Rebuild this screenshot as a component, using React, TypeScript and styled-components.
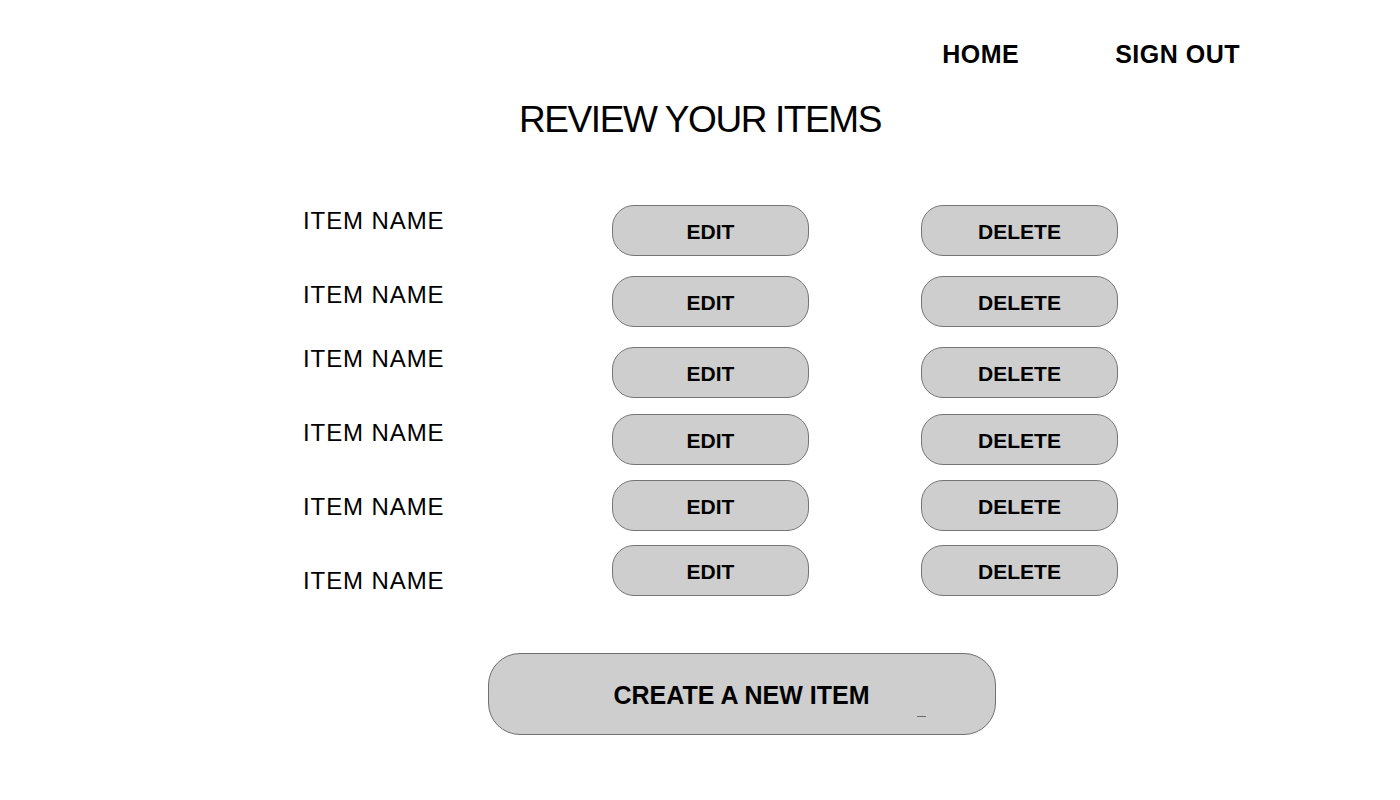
import styled, { createGlobalStyle } from 'styled-components';

const GlobalStyle = createGlobalStyle`
  body {
    margin: 0;
    background: #ffffff;
    font-family: 'Liberation Sans', Arial, Helvetica, sans-serif;
    color: #000000;
  }
`;

const Page = styled.div`
  width: 1400px;
  height: 800px;
  display: flex;
  flex-direction: column;
  align-items: center;
`;

const Nav = styled.nav`
  align-self: stretch;
  display: flex;
  justify-content: flex-end;
  gap: 96px;
  padding: 39px 160px 0 0;
`;

const NavLink = styled.a`
  font-size: 25px;
  font-weight: bold;
  line-height: 30px;
  letter-spacing: 0.5px;
  color: #000000;
  text-decoration: none;
  cursor: pointer;
`;

const Title = styled.h1`
  margin: 31px 0 0;
  font-size: 37px;
  font-weight: normal;
  line-height: 40px;
  letter-spacing: -1.4px;
  text-align: center;
`;

const List = styled.div`
  align-self: stretch;
  display: flex;
  flex-direction: column;
  padding: 65px 0 0 303px;
`;

const Row = styled.div<{ $gap: number }>`
  display: flex;
  align-items: flex-start;
  margin-top: ${(p) => p.$gap}px;
`;

const ItemName = styled.div<{ $shift: number }>`
  width: 309px;
  font-size: 24px;
  line-height: 30px;
  letter-spacing: 0.9px;
  margin-top: ${(p) => p.$shift}px;
`;

const Actions = styled.div`
  display: flex;
  gap: 112px;
`;

const PillButton = styled.button`
  width: 197px;
  height: 51px;
  box-sizing: border-box;
  border: 1px solid #767676;
  border-radius: 22px;
  background: #cecece;
  font-family: 'Liberation Sans', Arial, Helvetica, sans-serif;
  font-size: 21px;
  font-weight: bold;
  color: #000000;
  padding: 2px 0 0;
  cursor: pointer;
`;

const CreateButton = styled.button`
  position: relative;
  margin: 57px 0 0 83px;
  width: 508px;
  height: 82px;
  box-sizing: border-box;
  border: 1px solid #6f6f6f;
  border-radius: 32px;
  background: #cecece;
  font-family: 'Liberation Sans', Arial, Helvetica, sans-serif;
  font-size: 25px;
  font-weight: bold;
  color: #000000;
  padding: 2px 0 0;
  cursor: pointer;
`;

const Caret = styled.span`
  position: absolute;
  left: 428px;
  top: 62px;
  width: 9px;
  height: 1px;
  background: #6a6a6a;
`;

const rows = [
  { gap: 0, shift: 1 },
  { gap: 20, shift: 4 },
  { gap: 20, shift: -3 },
  { gap: 16, shift: 4 },
  { gap: 15, shift: 12 },
  { gap: 14, shift: 21 },
];

function App() {
  return (
    <Page>
      <GlobalStyle />
      <Nav>
        <NavLink>HOME</NavLink>
        <NavLink>SIGN OUT</NavLink>
      </Nav>
      <Title>REVIEW YOUR ITEMS</Title>
      <List>
        {rows.map((r, i) => (
          <Row key={i} $gap={r.gap}>
            <ItemName $shift={r.shift}>ITEM NAME</ItemName>
            <Actions>
              <PillButton>EDIT</PillButton>
              <PillButton>DELETE</PillButton>
            </Actions>
          </Row>
        ))}
      </List>
      <CreateButton>
        CREATE A NEW ITEM
        <Caret />
      </CreateButton>
    </Page>
  );
}

export default App;
